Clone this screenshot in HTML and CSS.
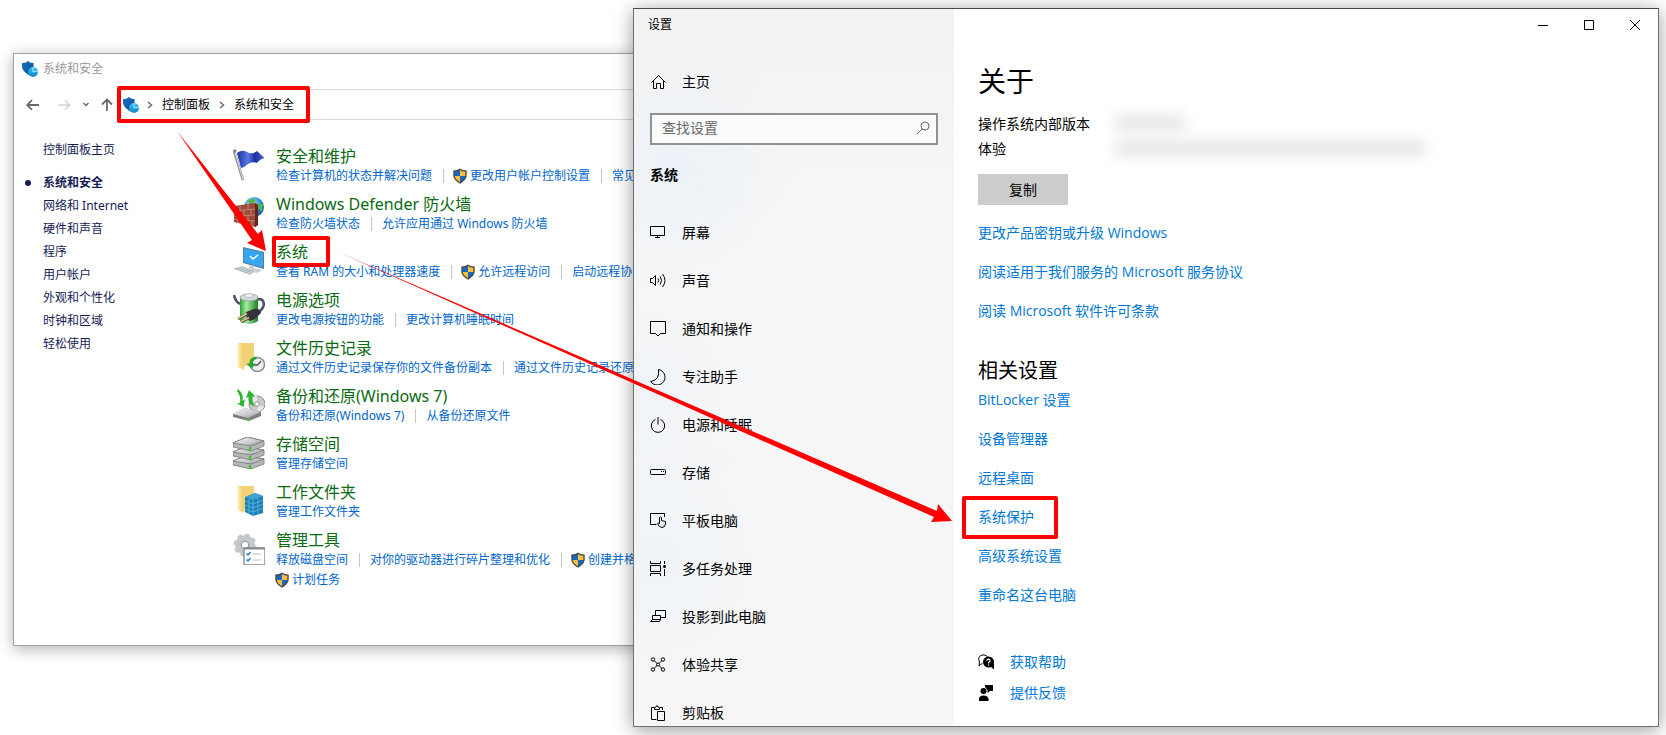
FILE: index.html
```html
<!DOCTYPE html>
<html lang="zh-CN">
<head>
<meta charset="utf-8">
<meta name="viewport" content="width=device-width, initial-scale=1">
<title>系统保护</title>
<link rel="stylesheet" href="styles.css">
</head>
<body>
<svg class="defs" aria-hidden="true">
  <defs>
    <linearGradient id="g-blue" x1="0" y1="0" x2="1" y2="1"><stop offset="0" stop-color="#1a75c4"/><stop offset="1" stop-color="#0a4a90"/></linearGradient>
    <linearGradient id="g-cyan" x1="0" y1="0" x2="0" y2="1"><stop offset="0" stop-color="#35c3f3"/><stop offset="1" stop-color="#0e86d0"/></linearGradient>
    <linearGradient id="g-flag" x1="0" y1="0" x2="1" y2="0"><stop offset="0" stop-color="#1c2f9c"/><stop offset=".4" stop-color="#5b79e6"/><stop offset=".65" stop-color="#1b2fa0"/><stop offset="1" stop-color="#4c66d8"/></linearGradient>
    <linearGradient id="g-folder" x1="0" y1="0" x2="1" y2="0"><stop offset="0" stop-color="#ffeaa6"/><stop offset="1" stop-color="#f2cd66"/></linearGradient>
    <linearGradient id="g-metal" x1="0" y1="0" x2="1" y2="1"><stop offset="0" stop-color="#fafafa"/><stop offset=".6" stop-color="#c6c7ca"/><stop offset="1" stop-color="#85868a"/></linearGradient>
    <linearGradient id="g-bat" x1="0" y1="0" x2="1" y2="0"><stop offset="0" stop-color="#2f9d35"/><stop offset=".35" stop-color="#a5ec9d"/><stop offset="1" stop-color="#1c7f26"/></linearGradient>
    <radialGradient id="g-globe" cx=".4" cy=".3" r=".8"><stop offset="0" stop-color="#b8ecff"/><stop offset=".5" stop-color="#2f8fe0"/><stop offset="1" stop-color="#123f95"/></radialGradient>
    <symbol id="i-security" viewBox="0 0 16 16">
      <path d="M0 2Q4 2.500 5.800 0Q8 2.300 11.500 2V6Q11 10.500 6.500 14Q.5 10 0 6Z" fill="url(#g-blue)"/>
      <circle cx="11" cy="11" r="5" fill="url(#g-cyan)"/>
      <path d="M11 11V6.200M11 11L16 10" stroke="#b8ecff" fill="none"/>
    </symbol>
    <symbol id="i-uac" viewBox="0 0 14 16">
      <path d="M7 .5Q9.500 2.400 13.700 2.600V8Q13 12.600 7 15.700Q1 12.600 .3 8V2.600Q4.500 2.400 7 .5Z" fill="#4a4a4a"/>
      <path d="M7 2V8H1.700V3.800Q5 3.600 7 2Z" fill="#1666c4"/><path d="M7 2V8H12.300V3.800Q9 3.600 7 2Z" fill="#fbbf3c"/>
      <path d="M1.700 8H7V14.200Q2.200 11.500 1.700 8Z" fill="#fbbf3c"/><path d="M12.300 8H7V14.200Q11.800 11.500 12.300 8Z" fill="#1666c4"/>
    </symbol>
  </defs>
</svg>

<main class="desktop">
  <section class="panel-window" aria-label="系统和安全">
    <header class="panel-title">
      <svg class="icon-16"><use href="#i-security"/></svg>
      <span>系统和安全</span>
    </header>
    <div class="panel-nav">
      <div class="panel-buttons">
        <button class="plain" aria-label="后退"><svg width="14" height="12" viewBox="0 0 14 12"><path d="M13 6H1.500M6 1.200L1.200 6L6 10.800" fill="none" stroke="#6b6b6b" stroke-width="1.800"/></svg></button>
        <button class="plain" aria-label="前进"><svg width="14" height="12" viewBox="0 0 14 12"><path d="M1 6H12.500M8 1.200L12.800 6L8 10.800" fill="none" stroke="#d5d5d5" stroke-width="1.600"/></svg></button>
        <button class="plain" aria-label="最近"><svg width="8" height="12" viewBox="0 0 8 12"><path d="M1.500 4L4 6.500L6.500 4" fill="none" stroke="#6b6b6b" stroke-width="1.500"/></svg></button>
        <button class="plain" aria-label="向上"><svg width="12" height="14" viewBox="0 0 12 14"><path d="M6 13V2M1 6.500L6 1.500L11 6.500" fill="none" stroke="#6b6b6b" stroke-width="1.800"/></svg></button>
      </div>
      <nav class="address" aria-label="地址">
        <svg class="icon-16"><use href="#i-security"/></svg>
        <svg class="crumb-arrow" width="6" height="8" viewBox="0 0 6 8"><path d="M1 1L4.500 4L1 7" fill="none" stroke="#6b6b6b" stroke-width="1.500"/></svg>
        <a href="#">控制面板</a>
        <svg class="crumb-arrow" width="6" height="8" viewBox="0 0 6 8"><path d="M1 1L4.500 4L1 7" fill="none" stroke="#6b6b6b" stroke-width="1.500"/></svg>
        <a href="#">系统和安全</a>
      </nav>
    </div>
    <div class="panel-body">
      <nav class="panel-side" aria-label="类别">
        <a class="side-home" href="#">控制面板主页</a>
        <a class="current" href="#">系统和安全</a>
        <a href="#">网络和 Internet</a>
        <a href="#">硬件和声音</a>
        <a href="#">程序</a>
        <a href="#">用户帐户</a>
        <a href="#">外观和个性化</a>
        <a href="#">时钟和区域</a>
        <a href="#">轻松使用</a>
      </nav>
      <div class="categories">
        <article class="category">
          <svg class="icon-32" viewBox="0 0 32 32"><path d="M1 2L10 31" stroke="#8d9094" stroke-width="2.600"/><path d="M1.500 2L10 30" stroke="#dfe1e4"/><circle cx="1.800" cy="2" r="1.800" fill="#85888c"/><path d="M4 4Q9 0 14 3Q19 6 24 2L31.500 9Q27 10 24 14Q19 12 15 15Q12 18 8 19Z" fill="url(#g-flag)"/></svg>
          <h2><a href="#">安全和维护</a></h2>
          <p class="tasks"><a href="#">检查计算机的状态并解决问题</a><a href="#"><svg class="uac"><use href="#i-uac"/></svg>更改用户帐户控制设置</a><a href="#">常见</a></p>
        </article>
        <article class="category">
          <svg class="icon-32" viewBox="0 0 32 32"><circle cx="21" cy="10" r="10" fill="url(#g-globe)"/><path d="M15 4Q19 0 23 3L20 7L22 10L17 9ZM25 5L30 8L29 15L26 12Z" fill="#55b83c"/><path d="M1 9L22 6L25 8V28L22 30L1 25Z" fill="#9c4a35"/><path d="M22 6L25 8V28L22 30Z" fill="#5e2a20"/><path d="M1 14L22 12M1 19L22 18M1 22L22 24M7 8V14M15 7V12M4 14V19M11 13V18M18 12V18M8 19V23M15 18V24M5 23V26M12 24V28M19 24V29" stroke="#d09a88" stroke-width=".7"/></svg>
          <h2><a href="#">Windows Defender 防火墙</a></h2>
          <p class="tasks"><a href="#">检查防火墙状态</a><a href="#">允许应用通过 Windows 防火墙</a></p>
        </article>
        <article class="category">
          <svg class="icon-32" viewBox="0 0 32 32"><path d="M10 2L31 7V24L10 18Z" fill="#5d7f96"/><path d="M11 3.200L30 8V22.500L11 17Z" fill="#36a7f5"/><path d="M17 11L20 14L25 10" fill="none" stroke="#fff" stroke-width="1.500"/><path d="M17 20L22 21L20 23L29 25L24 28L15 25Z" fill="#c2cbd2"/><path d="M0 23L9 21L24 26L17 30Z" fill="#d7dde1"/><path d="M4 23L19 27.500M7 22L21 26.500M1 23.500L17 29" stroke="#9ba5ac" stroke-width=".8"/></svg>
          <h2><a href="#">系统</a></h2>
          <p class="tasks"><a href="#">查看 RAM 的大小和处理器速度</a><a href="#"><svg class="uac"><use href="#i-uac"/></svg>允许远程访问</a><a href="#">启动远程协</a></p>
        </article>
        <article class="category">
          <svg class="icon-32" viewBox="0 0 32 32"><path d="M1 2Q3 11 9 11M22 7Q30 4 31 11Q30 17 24 20" fill="none" stroke="#4e5268" stroke-width="2.600"/><path d="M7 4Q16 0 25 4V28Q16 34 7 28Z" fill="url(#g-bat)"/><ellipse cx="16" cy="4.500" rx="9" ry="3.500" fill="#d5dadd" stroke="#8e9599" stroke-width=".7"/><ellipse cx="16" cy="2.600" rx="4" ry="2" fill="#f4f6f7" stroke="#9aa0a4" stroke-width=".6"/><path d="M13 19L21 16Q27 15 28 20L22 26L17 28Q12 25 13 19Z" fill="#34323a"/><path d="M14 21L5 26M16 25L8 29" stroke="#6f5a36" stroke-width="2.600"/><path d="M14 20.500L5 25.500M16 24.500L8 28.500" stroke="#efdfb5" stroke-width="1.200"/></svg>
          <h2><a href="#">电源选项</a></h2>
          <p class="tasks"><a href="#">更改电源按钮的功能</a><a href="#">更改计算机睡眠时间</a></p>
        </article>
        <article class="category">
          <svg class="icon-32" viewBox="0 0 32 32"><path d="M5 2H21V25H9Z" fill="#f3d277"/><path d="M5 2L11 5V29L5 26Z" fill="url(#g-folder)"/><circle cx="24.500" cy="23.500" r="7" fill="#eceeef" stroke="#8b9093" stroke-width="1.600"/><path d="M24.500 24L28 20M24.500 24H20.500" stroke="#4e5356" stroke-width="1.300"/><path d="M23 15.500Q16 16.500 16.500 22.500H13.500L18.500 28L22.500 22.500H20Q19.500 19 24 18Z" fill="#2da63b"/></svg>
          <h2><a href="#">文件历史记录</a></h2>
          <p class="tasks"><a href="#">通过文件历史记录保存你的文件备份副本</a><a href="#">通过文件历史记录还原</a></p>
        </article>
        <article class="category">
          <svg class="icon-32" viewBox="0 0 32 32"><circle cx="24" cy="15" r="8" fill="#c9c9cb" stroke="#8f8f92"/><path d="M24 15L17 11Q20 7 24 7ZM24 15L31 18Q29 22 25 23Z" fill="#eee5f1"/><circle cx="24" cy="15" r="2.300" fill="#fff" stroke="#8f8f92"/><path d="M0 25L12 19L28 23V27L16 32L0 28Z" fill="#7d7e82"/><path d="M0 25L12 19L28 23L15 29Z" fill="url(#g-metal)"/><path d="M16 29V32" stroke="#3ec31f" stroke-width="2"/><path d="M5 0Q11 5 9.500 12L12 10L10.500 18L4 14.500L7 14Q8 7 4 2Z" fill="#2bb52b"/><path d="M16 1L22 7L19.500 7.500Q19 14 22 18Q14 15 15.500 8L13 9Z" fill="#2bb52b"/></svg>
          <h2><a href="#">备份和还原(Windows 7)</a></h2>
          <p class="tasks"><a href="#">备份和还原(Windows 7)</a><a href="#">从备份还原文件</a></p>
        </article>
        <article class="category">
          <svg class="icon-32" viewBox="0 0 32 32"><g stroke="#77787b" stroke-width=".8" stroke-linejoin="round"><path d="M0 24L12 19L31 22V27L18 32L0 28Z" fill="#b5b6b9"/><path d="M0 24L12 19L31 22L18 27Z" fill="url(#g-metal)"/><path d="M0 15L12 10L31 13V18L18 23L0 19Z" fill="#b5b6b9"/><path d="M0 15L12 10L31 13L18 18Z" fill="url(#g-metal)"/><path d="M0 6L14 0L31 4V9L18 14L0 10Z" fill="#b5b6b9"/><path d="M0 6L14 0L31 4L18 9Z" fill="url(#g-metal)"/></g><path d="M17 10V14M17 19V23M17 28V32" stroke="#3ec31f" stroke-width="2.200"/></svg>
          <h2><a href="#">存储空间</a></h2>
          <p class="tasks"><a href="#">管理存储空间</a></p>
        </article>
        <article class="category">
          <svg class="icon-32" viewBox="0 0 32 32"><path d="M5 1H21V25H9Z" fill="#f3d277"/><path d="M5 1L11 4V28L5 25Z" fill="url(#g-folder)"/><path d="M12 12L22 8L30 11V28L20 31L12 27Z" fill="#1c7fb4"/><path d="M12 12L22 8L30 11L20 15Z" fill="#3fa4d2"/><path d="M12 16L20 19L30 15M12 20L20 23L30 19M12 24L20 27L30 23M20 15V31M16 14V29M25 13V29" fill="none" stroke="#5fbde2" stroke-width=".8"/></svg>
          <h2><a href="#">工作文件夹</a></h2>
          <p class="tasks"><a href="#">管理工作文件夹</a></p>
        </article>
        <article class="category">
          <svg class="icon-32" viewBox="0 0 32 32"><circle cx="12" cy="12" r="7" fill="none" stroke="#c3c8cc" stroke-width="6"/><circle cx="12" cy="12" r="10" fill="none" stroke="#c3c8cc" stroke-width="3" stroke-dasharray="4.200 3.650"/><circle cx="12" cy="12" r="3.800" fill="#fff" stroke="#85898d"/><path d="M11 15H32V32H11Z" fill="#fff" stroke="#8a8a8a" stroke-width="1.400"/><path d="M11 15.500H32" stroke="#8a8a8a" stroke-width="2"/><path d="M13.500 20.500L15 22L17.500 19M13.500 26.500L15 28L17.500 25" fill="none" stroke="#1f7fd0" stroke-width="1.500"/><path d="M20 21H28M20 27H28" stroke="#bfbfbf"/></svg>
          <h2><a href="#">管理工具</a></h2>
          <p class="tasks"><a href="#">释放磁盘空间</a><a href="#">对你的驱动器进行碎片整理和优化</a><a href="#"><svg class="uac"><use href="#i-uac"/></svg>创建并格</a></p>
          <p class="tasks"><a href="#"><svg class="uac"><use href="#i-uac"/></svg>计划任务</a></p>
        </article>
      </div>
    </div>
  </section>

  <section class="settings-window" aria-label="设置">
    <aside class="settings-side">
      <div class="settings-title">设置</div>
      <a class="nav-item home" href="#"><svg class="icon-16" viewBox="0 0 16 16"><path d="M1.500 8.500L8.500 1.500L15.500 8.500M3.500 7V14.500H6.500V9.500H10.500V14.500H13.500V7" fill="none" stroke="#000"/></svg>主页</a>
      <label class="search">
        <input type="search" placeholder="查找设置" aria-label="查找设置">
        <svg width="14" height="14" viewBox="0 0 14 14"><circle cx="9" cy="5" r="4" fill="none" stroke="#666"/><path d="M6 8L1 13" stroke="#666"/></svg>
      </label>
      <h2 class="settings-group">系统</h2>
      <nav class="settings-nav" aria-label="系统">
        <a class="nav-item" href="#"><svg class="icon-16" viewBox="0 0 16 16"><path d="M.5 1.500H14.500V10.500H.5ZM7.500 10.500V12.500M5 12.500H10" fill="none" stroke="#000"/></svg>屏幕</a>
        <a class="nav-item" href="#"><svg class="icon-16" viewBox="0 0 16 16"><path d="M.5 5.500H2.500L5.500 2.500V12.500L2.500 9.500H.5ZM8 5.500Q9.400 7.500 8 9.500M10.200 3.500Q12.800 7.500 10.200 11.500M12.500 1Q17.500 7.500 12.500 14" fill="none" stroke="#000"/></svg>声音</a>
        <a class="nav-item" href="#"><svg class="icon-16" viewBox="0 0 16 16"><path d="M.5 .5H15.500V12.500H10.500L8 15L5.500 12.500H.5Z" fill="none" stroke="#000"/></svg>通知和操作</a>
        <a class="nav-item" href="#"><svg class="icon-16" viewBox="0 0 16 16"><path d="M8.500 .5A7.800 7.800 0 1 1 .7 12.500Q10 11 8.500 .5Z" fill="none" stroke="#000"/></svg>专注助手</a>
        <a class="nav-item" href="#"><svg class="icon-16" viewBox="0 0 16 16"><path d="M5.500 2.500A6.700 6.700 0 1 0 10.500 2.500M8 0V7.500" fill="none" stroke="#000"/></svg>电源和睡眠</a>
        <a class="nav-item" href="#"><svg class="icon-16" viewBox="0 0 16 16"><rect x=".5" y="4.500" width="15" height="5" rx="1" fill="none" stroke="#000"/><path d="M11 6.500H12M13 6.500H14" stroke="#000"/></svg>存储</a>
        <a class="nav-item" href="#"><svg class="icon-16" viewBox="0 0 16 16"><path d="M6.500 11.500H.5V.5H14.500V4M9.500 10.500V4.500Q10.500 3 11.500 4.500V7.500L15.500 8.500V11Q15 14.500 12 14.500Q9 14.500 7.500 10.500Q8 9.500 9.500 10.500" fill="none" stroke="#000"/></svg>平板电脑</a>
        <a class="nav-item" href="#"><svg class="icon-16" viewBox="0 0 16 16"><path d="M.5 0V2.500H10.500V0M.5 15V12.500H10.500V15M.5 4.500H10.500V10.500H.5ZM14.500 0V3M14.500 8V15" fill="none" stroke="#000"/><circle cx="14.500" cy="5.500" r="1.500"/></svg>多任务处理</a>
        <a class="nav-item" href="#"><svg class="icon-16" viewBox="0 0 16 16"><path d="M5.500 6V1.500H15.500V8.500H10.500M2.500 6.500H10.500V10.500H2.500ZM2.500 10.500L.5 12.500H9.500L10.500 10.500" fill="none" stroke="#000"/></svg>投影到此电脑</a>
        <a class="nav-item" href="#"><svg class="icon-16" viewBox="0 0 16 16"><g fill="none" stroke="#000"><circle cx="3" cy="2.500" r="1.700"/><circle cx="13" cy="2.500" r="1.700"/><circle cx="3" cy="12.500" r="1.700"/><circle cx="13" cy="12.500" r="1.700"/><circle cx="8" cy="7.500" r="1.500"/><path d="M4.200 3.700L7 6.500M9 6.500L11.800 3.700M4.200 11.300L7 8.500M9 8.500L11.800 11.300"/></g></svg>体验共享</a>
        <a class="nav-item" href="#"><svg class="icon-16" viewBox="0 0 16 16"><path d="M6.500 14.500H1.500V2.500H4.500M9.500 2.500H12.500V5M4.500 4.500V2.500L6 2L7 .5L8 2L9.500 2.500V4.500ZM7.500 6.500H14.500V15.500H7.500Z" fill="none" stroke="#000"/></svg>剪贴板</a>
      </nav>
    </aside>
    <div class="settings-main">
      <div class="caption">
        <button class="plain" aria-label="最小化"><svg width="10" height="10" viewBox="0 0 10 10"><path d="M0 5.500H10" stroke="#000"/></svg></button>
        <button class="plain" aria-label="最大化"><svg width="10" height="10" viewBox="0 0 10 10"><path d="M.5 .5H9.500V9.500H.5Z" fill="none" stroke="#000"/></svg></button>
        <button class="plain" aria-label="关闭"><svg width="10" height="10" viewBox="0 0 10 10"><path d="M0 0L10 10M10 0L0 10" stroke="#000"/></svg></button>
      </div>
      <div class="about">
        <h1>关于</h1>
        <dl class="specs">
          <dt>操作系统内部版本</dt><dd><span class="redacted short"></span></dd>
          <dt>体验</dt><dd><span class="redacted long"></span></dd>
        </dl>
        <button class="copy">复制</button>
        <ul class="links">
          <li><a href="#">更改产品密钥或升级 Windows</a></li>
          <li><a href="#">阅读适用于我们服务的 Microsoft 服务协议</a></li>
          <li><a href="#">阅读 Microsoft 软件许可条款</a></li>
        </ul>
        <h2>相关设置</h2>
        <ul class="links related">
          <li><a href="#">BitLocker 设置</a></li>
          <li><a href="#">设备管理器</a></li>
          <li><a href="#">远程桌面</a></li>
          <li><a href="#">系统保护</a></li>
          <li><a href="#">高级系统设置</a></li>
          <li><a href="#">重命名这台电脑</a></li>
        </ul>
        <ul class="support">
          <li><svg class="icon-16" viewBox="0 0 16 16"><path d="M4.500 9.500Q2.500 10 1 12L1.500 8Q-1 4 2.500 1.500Q6 -.5 9.500 2.500" fill="none" stroke="#000"/><circle cx="10.500" cy="8" r="5.500"/><path d="M12 12L16 15.500V9Z"/><path d="M8.900 6.800Q9 5.200 10.600 5.200Q12.200 5.400 12 6.900Q11.800 7.800 10.600 8.600V9.400M10.600 10.400V11.600" fill="none" stroke="#fff" stroke-width="1.200"/></svg><a href="#">获取帮助</a></li>
          <li><svg class="icon-16" viewBox="0 0 16 16"><circle cx="5.500" cy="6" r="3"/><path d="M1 16V13.500Q1.500 10.500 5.500 10.500Q9.500 10.500 10.500 13.500V16ZM7 0H15V6H12L9.500 8V5L7 2Z"/></svg><a href="#">提供反馈</a></li>
        </ul>
      </div>
    </div>
  </section>

  <svg class="annotations" aria-hidden="true">
    <g fill="none" stroke="#f00" stroke-width="4" stroke-linejoin="round">
      <rect x="119" y="88" width="189" height="33"/>
      <rect x="274" y="238" width="54" height="27"/>
      <rect x="964" y="498" width="92" height="39"/>
    </g>
    <path d="M177 131L258 234L262 230L266 251L247 243L252 240Z" fill="#f00"/>
    <path d="M336 251L937 511L938 504L952 521L931 522L934 517Z" fill="#f00"/>
  </svg>
</main>
</body>
</html>
```

FILE: styles.css
```css
* { box-sizing: border-box; }

body {
  margin: 0;
  background: #fff;
  color: #000;
  font-family: "Open Sans", "Noto Sans CJK SC", sans-serif;
  font-size: 14px;
  line-height: 20px;
}

h1, h2, p, ul, dl, dd { margin: 0; padding: 0; font-weight: 400; }
ul { list-style: none; }
a { color: inherit; text-decoration: none; }
svg { display: block; flex: none; }

.defs { position: absolute; width: 0; height: 0; }
.icon-16 { width: 16px; height: 16px; }
.icon-32 { width: 32px; height: 32px; }

.plain {
  display: flex;
  align-items: center;
  justify-content: center;
  padding: 0;
  border: 0;
  background: none;
}

.desktop {
  position: relative;
  min-height: 100vh;
  overflow: hidden;
}

/* Control panel window */
.panel-window {
  position: absolute;
  top: 53px;
  left: 13px;
  width: 48vw;
  padding-bottom: 55px;
  overflow: hidden;
  border: 1px solid #a0a0a0;
  background: #fff;
  box-shadow: 0 3px 14px rgba(0, 0, 0, .3);
  font-family: "Noto Sans", "Noto Sans CJK SC", sans-serif;
  font-size: 12px;
  white-space: nowrap;
}

.panel-title {
  display: flex;
  align-items: center;
  gap: 5px;
  height: 30px;
  padding-left: 8px;
  color: #999;
}

.panel-nav {
  display: flex;
  align-items: center;
  margin-top: 5px;
}

.panel-buttons {
  display: flex;
  align-items: center;
  gap: 11px;
  width: 104px;
  padding-left: 12px;
}
.panel-buttons .plain:nth-child(2) { margin-left: 6px; }

.address {
  display: flex;
  flex: 1;
  align-items: center;
  height: 31px;
  padding-left: 4px;
  border: 1px solid #d9d9d9;
}
.crumb-arrow { margin: 0 9px 0 8px; }
.address a + .crumb-arrow { margin-left: 9px; }

.panel-body {
  display: flex;
  padding-top: 26px;
}

.panel-side {
  display: flex;
  flex-direction: column;
  width: 219px;
  padding: 0 0 0 29px;
  color: #151c55;
  line-height: 23px;
}
.side-home { margin: -8px 0 10px; }
.current {
  display: flex;
  align-items: center;
  margin-left: -18px;
  font-weight: 700;
}
.current::before {
  width: 6px;
  height: 6px;
  margin-right: 12px;
  border-radius: 50%;
  background: #151c55;
  content: "";
}

.categories {
  display: flex;
  flex-direction: column;
  gap: 8px;
}
.category {
  display: grid;
  grid-template-columns: 32px auto;
  column-gap: 11px;
}
.category .icon-32 { grid-row: 1 / span 2; margin-top: 3px; }
.category > * { grid-column: 2; }
.category > .icon-32 { grid-column: 1; }
.category h2 { color: #0b6b12; font-size: 16px; }
.tasks { display: flex; align-items: center; color: #0066cc; }
.tasks a { display: flex; align-items: center; gap: 3px; }
.tasks a + a::before {
  width: 1px;
  height: 14px;
  margin: 0 7px 0 11px;
  background: #c8c8c8;
  content: "";
}
.uac { width: 14px; height: 16px; margin-left: -1px; }

/* Settings window */
.settings-window {
  position: absolute;
  top: 8px;
  right: 7px;
  bottom: 8px;
  left: 633px;
  display: flex;
  overflow: hidden;
  border: 1px solid #707070;
  border-top-color: #484848;
  background: #fff;
  box-shadow: 0 3px 18px rgba(0, 0, 0, .4);
}

.settings-side {
  flex: none;
  width: 320px;
  padding: 0 16px;
  background:
    radial-gradient(circle at 40px 160px, rgba(230, 240, 250, .6), transparent 130px),
    radial-gradient(circle at 10px 380px, rgba(232, 241, 250, .4), transparent 130px),
    radial-gradient(circle at 20px 550px, rgba(232, 241, 250, .5), transparent 140px),
    linear-gradient(#f2f2f2, #f6f6f6 200px);
}
.settings-title {
  margin-left: -2px;
  font-size: 12px;
  line-height: 32px;
}
.nav-item {
  display: flex;
  align-items: center;
  gap: 16px;
  height: 48px;
}
.home { margin-top: 17px; }
.search {
  display: flex;
  align-items: center;
  height: 32px;
  margin-top: 7px;
  padding: 0 6px 2px 10px;
  border: 2px solid #919191;
  background: #fafbfb;
}
.search input {
  flex: 1;
  min-width: 0;
  padding: 0;
  border: 0;
  outline: 0;
  background: none;
  font: inherit;
}
.search input::placeholder { color: #6a6a6a; opacity: 1; }
.settings-group {
  margin: 20px 0 24px;
  font-size: 14px;
  font-weight: 700;
}

.settings-main { flex: 1; min-width: 0; }
.caption { display: flex; justify-content: flex-end; }
.caption .plain { width: 46px; height: 32px; }

.about { padding: 20px 24px; }
.about h1 { font-size: 28px; line-height: 40px; }
.specs {
  display: grid;
  grid-template-columns: 137px 1fr;
  margin-top: 10px;
  line-height: 25px;
}
.redacted {
  display: block;
  height: 16px;
  margin-top: 4px;
  background: #e6e6e6;
  filter: blur(7px);
}
.short { width: 70px; }
.long { width: 310px; }
.copy {
  display: block;
  width: 90px;
  height: 31px;
  margin-top: 13px;
  padding: 0;
  border: 0;
  background: #ccc;
  font: inherit;
}
.links {
  display: flex;
  flex-direction: column;
  gap: 19px;
  margin-top: 18px;
  color: #0078d7;
}
.about h2 {
  margin-top: 35px;
  font-size: 20px;
  line-height: 30px;
}
.related { margin-top: 4px; }
.support {
  display: flex;
  flex-direction: column;
  gap: 11px;
  margin-top: 47px;
  color: #0078d7;
}
.support li { display: flex; align-items: center; gap: 16px; }

.annotations {
  position: absolute;
  inset: 0;
  width: 100%;
  height: 100%;
  pointer-events: none;
}
```
